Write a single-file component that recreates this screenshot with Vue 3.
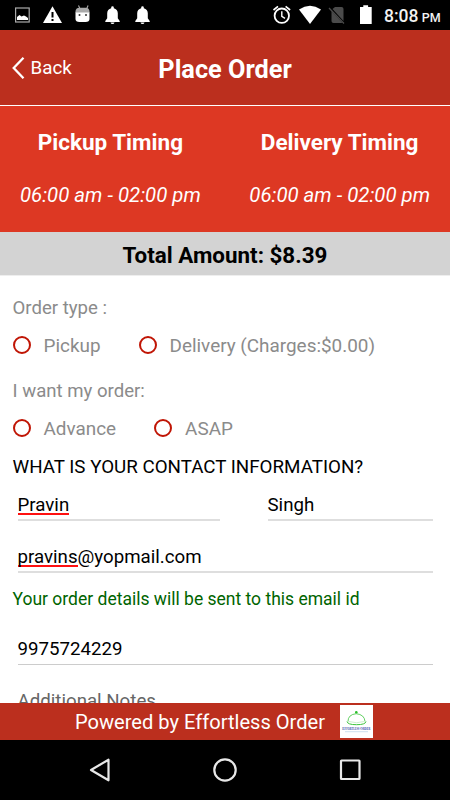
<script setup>
import { ref } from "vue";

const timings = [
  { title: "Pickup Timing", hours: "06:00 am - 02:00 pm" },
  { title: "Delivery Timing", hours: "06:00 am - 02:00 pm" }
];

const orderType = ref("");
const orderTime = ref("");
</script>

<template>
  <div class="screen">
    <div class="status-bar">
      <svg class="status-icons" width="160" height="30" viewBox="0 0 160 30">
        <rect x="15.6" y="8" width="13.6" height="14" fill="none" stroke="#aaa" stroke-width="1.2" />
        <path d="M17 20v-3l2.5-2 2 1.5 2.5-1 2 1 2 1.5v2z" fill="#fff" />
        <path d="M52.5 6.3 62 23H43z" fill="#fff" />
        <path d="M52.5 12v5.5M52.5 19v2" stroke="#000" stroke-width="2" />
        <path d="m78.5 5.5 1.6 3.5m8-3.5L86.5 9" stroke="#aaa" stroke-width="1.1" />
        <path d="M75.5 13v-1.5q0-3.8 4-3.8h6q4 0 4 3.8V13z" fill="#aaa" />
        <path d="M75.5 12.5h14V19q0 3-4 3h-6q-4 0-4-3z" fill="#fff" />
        <circle cx="79.5" cy="15" r="1" fill="#333" />
        <circle cx="86" cy="15" r="1" fill="#333" />
        <g v-for="x in [112.5, 142.5]" :key="x" :transform="`translate(${x} 0)`" fill="#fff">
          <path d="M-1.3 8.2V7.5a1.3 1.3 0 0 1 2.6 0v.7c2.500.6 4 2.500 4 5v5L7.2 21v1H-7.200v-1l1.900-2.800v-5c0-2.500 1.500-4.400 4-5z" />
          <path d="M-2 22.500h4q-.3 1.600-2 1.600t-2-1.600z" />
        </g>
      </svg>
      <svg class="status-icons" width="110" height="30" viewBox="270 0 110 30">
        <g fill="none" stroke="#fff">
          <circle cx="281.8" cy="15.7" r="7.2" stroke-width="1.8" />
          <path d="M281.8 11.3v5l3.200 2" stroke-width="1.4" />
          <path d="m273.500 10 4.500-3.600m12.100 3.600-4.500-3.600" stroke-width="1.7" />
        </g>
        <path d="M299 9.500q11-7.300 22 0L310 24z" fill="#fff" />
        <path d="M332.500 9 335 7h6.500q2 0 2 2v12z" fill="#4b4b4b" />
        <path d="M331.500 11v10q0 2 2 2h9z" fill="#4b4b4b" />
        <path d="m329 8 15 15.500" stroke="#4b4b4b" stroke-width="1.3" />
        <path d="M360 7h3.300V5.300h4.800V7h3.600v17H360z" fill="#fff" />
      </svg>
      <div class="clock">8:08 <span>PM</span></div>
    </div>

    <header class="header">
      <button class="back" type="button">
        <svg width="13" height="24" viewBox="0 0 13 24">
          <path d="M11.500 1.700 1.700 12l9.800 10.300" fill="none" stroke="#fff" stroke-width="2.3" />
        </svg>
        <span>Back</span>
      </button>
      <h1>Place Order</h1>
    </header>

    <section class="timings">
      <div v-for="timing in timings" :key="timing.title" class="timing">
        <h2>{{ timing.title }}</h2>
        <p>{{ timing.hours }}</p>
      </div>
    </section>

    <div class="total">Total Amount: $8.39</div>

    <main class="form">
      <div class="label">Order type :</div>
      <div class="radio-row">
        <label class="radio radio-pickup">
          <input v-model="orderType" type="radio" value="pickup" /><span>Pickup</span>
        </label>
        <label class="radio radio-delivery">
          <input v-model="orderType" type="radio" value="delivery" /><span>Delivery (Charges:$0.00)</span>
        </label>
      </div>
      <div class="label">I want my order:</div>
      <div class="radio-row">
        <label class="radio radio-advance">
          <input v-model="orderTime" type="radio" value="advance" /><span>Advance</span>
        </label>
        <label class="radio radio-asap">
          <input v-model="orderTime" type="radio" value="asap" /><span>ASAP</span>
        </label>
      </div>
      <div class="contact-title">WHAT IS YOUR CONTACT INFORMATION?</div>
      <div class="name-row">
        <div class="field"><span class="misspelled">Pravin</span></div>
        <div class="field">Singh</div>
      </div>
      <div class="field email"><span class="misspelled">pravins</span>@yopmail.com</div>
      <div class="email-note">Your order details will be sent to this email id</div>
      <div class="field phone">9975724229</div>
      <div class="field notes">Additional Notes</div>
    </main>

    <footer class="footer">
      <span>Powered by Effortless Order</span>
      <svg class="brand" width="33" height="33" viewBox="0 0 33 33">
        <rect width="33" height="33" fill="#fff" />
        <g fill="none" stroke="#3cc43c">
          <path d="M8 16.500q0-7 8.200-7.800Q24.500 9.500 25 16.500" stroke-width=".8" />
          <path d="M7 16.500q.5 3.200 9.500 3.200t9.500-3.200" stroke-width="1" />
          <path d="M9 16.500q7.500 2.500 15 0" stroke-width=".5" stroke="#9be09b" />
        </g>
        <circle cx="16.3" cy="7.2" r="1.3" fill="#2abf2a" />
        <text x="2.3" y="25" textLength="28" lengthAdjust="spacingAndGlyphs">Effortless Order</text>
        <path d="M5 26.700h23" stroke="#b9d3e8" stroke-width=".7" />
      </svg>
    </footer>

    <nav class="nav-bar">
      <svg width="24" height="28" viewBox="0 0 24 28"><path d="M20.500 3.700v20.600L3 14z" /></svg>
      <svg width="28" height="28" viewBox="0 0 28 28"><circle cx="14" cy="14" r="10.7" /></svg>
      <svg width="24" height="24" viewBox="0 0 24 24"><rect x="3" y="2.5" width="18.5" height="18.5" rx=".5" /></svg>
    </nav>
  </div>
</template>

<style>
body {
  margin: 0;
}
</style>

<style scoped>
.screen {
  display: flex;
  flex-direction: column;
  width: 450px;
  height: 800px;
  overflow: hidden;
  background: #fff;
  font-family: Roboto, sans-serif;
  color: #000;
}

.screen * {
  box-sizing: border-box;
}

.status-bar {
  display: flex;
  height: 30px;
  background: #000;
}

.status-icons {
  display: block;
}

.status-icons + .status-icons {
  margin-left: 110px;
}

.clock {
  margin-left: 4px;
  line-height: 32px;
  font-size: 17.5px;
  font-weight: 500;
  color: #f2f2f2;
  white-space: nowrap;
}

.clock span {
  margin-left: -1px;
  font-size: 12.5px;
}

.header {
  display: grid;
  grid-template-columns: 110px 1fr 110px;
  align-items: center;
  height: 76px;
  border-bottom: 1.5px solid #fff;
  background: #bb2f1e;
  color: #fff;
}

.back {
  display: flex;
  align-items: center;
  gap: 6px;
  margin: 0;
  padding: 0 0 0 11.5px;
  border: 0;
  background: none;
  color: inherit;
  font: 400 18.75px/24px Roboto, sans-serif;
}

.header h1 {
  margin: 4px 0 0;
  font-size: 25.3px;
  line-height: 30px;
  font-weight: 700;
  text-align: center;
}

.timings {
  display: flex;
  justify-content: space-between;
  height: 126px;
  padding: 22px 20px 0;
  background: #dd3823;
  color: #fff;
  text-align: center;
}

.timing h2 {
  margin: 0;
  font-size: 22.5px;
  line-height: 28px;
  font-weight: 700;
}

.timing p {
  margin: 25px 0 0;
  font-size: 20.4px;
  line-height: 28px;
  font-style: italic;
}

.total {
  height: 44px;
  border-bottom: 1px solid #eee;
  background: #d3d3d3;
  font-size: 22.4px;
  line-height: 46px;
  font-weight: 700;
  text-align: center;
}

.form {
  height: 427px;
  padding: 20px 17.5px 0 12.5px;
  overflow: hidden;
}

.label {
  height: 24px;
  font-size: 18.6px;
  line-height: 24px;
  color: #8b8b8b;
}

.radio-row {
  display: flex;
  align-items: center;
  height: 38px;
  margin: 6px 0 15px;
}

.radio-row ~ .radio-row {
  margin: 5.5px 0 8.5px;
}

.radio {
  display: flex;
  align-items: center;
  gap: 13px;
  font-size: 18.9px;
  line-height: 24px;
  color: #8b8b8b;
}

.radio span {
  padding-top: 2px;
}

.radio input {
  appearance: none;
  width: 18px;
  height: 18px;
  margin: 0;
  border: 2px solid #c01505;
  border-radius: 50%;
}

.radio-pickup,
.radio-advance {
  margin-right: 38px;
}

.contact-title {
  font-size: 18.78px;
  line-height: 24px;
  white-space: nowrap;
}

.name-row {
  display: grid;
  grid-template-columns: 202px 165px;
  column-gap: 48px;
  margin: 14px 0 0 5px;
}

.field {
  height: 28px;
  border-bottom: 2px solid #dedede;
  font-size: 18.7px;
  line-height: 24px;
}

.misspelled {
  display: inline-block;
  height: 22px;
  border-bottom: 2px solid #f11;
}

.email {
  margin: 24px 0 0 5px;
}

.email-note {
  margin-top: 14px;
  font-size: 17.5px;
  line-height: 24px;
  color: #006400;
}

.phone {
  margin: 26px 0 0 5px;
  border-bottom: 1px solid #ccc;
}

.notes {
  margin: 23.5px 0 0 5px;
  color: #666;
}

.footer {
  display: flex;
  justify-content: center;
  align-items: center;
  gap: 15px;
  height: 37px;
  padding-right: 2px;
  background: #bb2f1e;
  color: #fff;
  font-size: 20.1px;
}

.brand {
  display: block;
}

.brand text {
  font: 700 4px "Liberation Serif", serif;
  font-variant: small-caps;
  fill: #3548a8;
}

.nav-bar {
  display: flex;
  justify-content: space-between;
  align-items: center;
  height: 60px;
  padding: 0 88px;
  background: #000;
}

.nav-bar svg {
  fill: none;
  stroke: #e8e8e8;
  stroke-width: 2.2;
  stroke-linejoin: round;
}
</style>
